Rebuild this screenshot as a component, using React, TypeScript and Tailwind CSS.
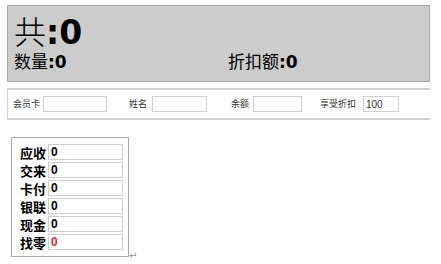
import React from "react";

const cjk = { fontFamily: '"Noto Sans CJK SC", "Liberation Sans", sans-serif' };
const num = { fontFamily: '"DejaVu Sans", sans-serif' };

const payRows = [
  { label: "应收", value: "0" },
  { label: "交来", value: "0" },
  { label: "卡付", value: "0" },
  { label: "银联", value: "0" },
  { label: "现金", value: "0" },
  { label: "找零", value: "0", red: true },
];

const App: React.FC = () => {
  return (
    <div className="w-[441px] h-[264px] bg-white pl-[7px] pt-[5px] text-black" style={cjk}>
      {/* totals */}
      <div className="w-[423px] h-[77px] bg-[#cccccc] border border-[#a8a8a8] pl-[6px] pt-[7px]">
        <div className="flex items-baseline h-[37px] whitespace-nowrap">
          <span className="inline-block text-[32px] leading-[34px] font-light">共</span>
          <span className="inline-block text-[33px] leading-[34px] font-bold" style={num}>:0</span>
        </div>
        <div className="flex items-baseline text-[17px] leading-[22px] whitespace-nowrap">
          <div className="w-[214px]">
            数量<b style={num}>:0</b>
          </div>
          <div>
            折扣额<b style={num}>:0</b>
          </div>
        </div>
      </div>

      {/* member info */}
      <div className="mt-[6px] w-[423px] h-[32px] border-t-2 border-b-2 border-l border-[#d2d2d2] flex items-center text-[9px] text-[#333] whitespace-nowrap">
        <span className="ml-[5px] w-[30px]">会员卡</span>
        <input className="w-[64px] h-[16px] border border-[#cfcfcf] outline-none" />
        <span className="ml-[22px] w-[23px]">姓名</span>
        <input className="w-[55px] h-[16px] border border-[#cfcfcf] outline-none" />
        <span className="ml-[24px] w-[22px]">余额</span>
        <input className="w-[49px] h-[16px] border border-[#cfcfcf] outline-none" />
        <span className="ml-[18px] w-[43px]">享受折扣</span>
        <input
          className="w-[36px] h-[16px] border border-[#cfcfcf] outline-none px-[2px] text-[10px] text-[#333]"
          defaultValue="100"
          style={{ fontFamily: '"Liberation Sans", sans-serif' }}
        />
      </div>

      {/* payment */}
      <div className="flex items-end mt-[17px] ml-[4px]">
        <div className="w-[118px] h-[120px] border border-[#a8a8a8] pt-[6px] pl-[8px] flex flex-col gap-[2px]">
          {payRows.map((r) => (
            <div key={r.label} className="flex items-center h-[16px]">
              <span className="w-[28px] text-[13px] font-bold leading-none whitespace-nowrap">{r.label}</span>
              <div className="w-[75px] h-[16px] border border-[#cfcfcf] bg-white flex items-center pl-[2px]">
                <span
                  className={`text-[12px] font-bold leading-none ${r.red ? "text-[#d03030]" : "text-black"}`}
                  style={{ fontFamily: '"Liberation Sans", sans-serif' }}
                >
                  {r.value}
                </span>
              </div>
            </div>
          ))}
        </div>
        <span className="text-[10px] text-[#999] leading-none mb-[-4px]" style={num}>↵</span>
      </div>
    </div>
  );
};

export default App;
